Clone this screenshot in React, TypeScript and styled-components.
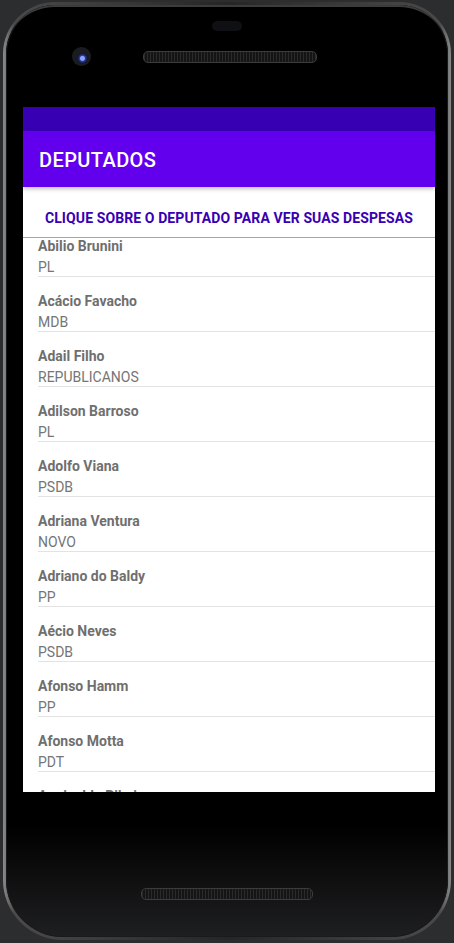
import styled, { createGlobalStyle } from "styled-components";

const GlobalStyle = createGlobalStyle`
  html, body {
    margin: 0;
    padding: 0;
    background-color: #2c2d2f;
    font-family: Roboto, "Noto Sans", sans-serif;
  }
`;

const Page = styled.div`
  width: 454px;
  height: 943px;
  padding: 2px 0 0 3px;
  box-sizing: border-box;
  overflow: hidden;
`;

const Phone = styled.div`
  width: 448px;
  height: 938px;
  padding: 3px;
  box-sizing: border-box;
  border-radius: 52px 52px 60px 60px;
  background: linear-gradient(90deg, #8a8a8a 0%, #4a4a4a 2.5%, #262626 50%, #4a4a4a 97.5%, #8a8a8a 100%);
`;

const Body = styled.div`
  height: 100%;
  border-radius: 49px 49px 57px 57px;
  background: linear-gradient(180deg, #000 0%, #000 88%, #1e1f20 100%);
  box-shadow: inset 0 5px 0 -3px #3c3c3c, inset 0 0 0 1px #1a1a1a;
  display: flex;
  flex-direction: column;
  overflow: hidden;
`;

const TopBezel = styled.div`
  height: 102px;
  display: flex;
  flex-direction: column;
  align-items: center;
  padding-top: 16px;
  box-sizing: border-box;
`;

const Sensor = styled.div`
  width: 30px;
  height: 10px;
  border-radius: 5px;
  background-color: #0f1014;
`;

const CameraRow = styled.div`
  align-self: stretch;
  display: flex;
  align-items: center;
  gap: 52px;
  margin-top: 16px;
  padding-left: 66px;
`;

const Camera = styled.div`
  width: 19px;
  height: 19px;
  border-radius: 50%;
  background: radial-gradient(circle at 55% 60%, #8fa0ff 0 2px, #2a3a9a 3px, #101830 5px, #1b1c20 6px);
`;

const Grill = styled.div<{ $width: number }>`
  width: ${(p) => p.$width}px;
  height: 10px;
  border-radius: 5px;
  border: 1px solid #3c3c3c;
  background: repeating-linear-gradient(90deg, #2a2a2a 0 1px, #151515 1px 3px);
`;

const Screen = styled.div`
  height: 685px;
  margin: 0 13px 0 17px;
  display: flex;
  flex-direction: column;
  background-color: #fff;
  overflow: hidden;
`;

const StatusBar = styled.div`
  height: 24px;
  flex-shrink: 0;
  background-color: #3700b3;
`;

const AppBar = styled.div`
  height: 56px;
  flex-shrink: 0;
  box-sizing: border-box;
  display: flex;
  align-items: center;
  padding: 2px 0 0 16px;
  background-color: #6200ee;
  box-shadow: 0 2px 4px rgba(0, 0, 0, 0.25);
  position: relative;
  z-index: 1;
`;

const Title = styled.h1`
  margin: 0;
  color: #fff;
  font-size: 20px;
  font-weight: 500;
  letter-spacing: 0.4px;
`;

const Hint = styled.div`
  height: 51px;
  flex-shrink: 0;
  box-sizing: border-box;
  padding-top: 22px;
  text-align: center;
  color: #3700b3;
  font-size: 14px;
  font-weight: 700;
  line-height: 18px;
  letter-spacing: 0.1px;
  border-bottom: 1px solid #a6a6a6;
`;

const List = styled.div`
  display: flex;
  flex-direction: column;
`;

const Row = styled.div`
  margin-left: 15px;
  padding: 16px 0 1px;
  border-bottom: 1px solid #e3e3e3;
  flex-shrink: 0;
  display: flex;
  flex-direction: column;
  gap: 5px;
  &:first-child {
    padding-top: 0;
  }
`;

const Name = styled.div`
  color: #6f6f6f;
  font-size: 14px;
  font-weight: 700;
  line-height: 16px;
`;

const Party = styled.div`
  color: #757575;
  font-size: 14px;
  line-height: 16px;
`;

const BottomBezel = styled.div`
  flex: 1;
  display: flex;
  justify-content: center;
  padding-top: 96px;
`;

const deputados = [
  { nome: "Abilio Brunini", partido: "PL" },
  { nome: "Acácio Favacho", partido: "MDB" },
  { nome: "Adail Filho", partido: "REPUBLICANOS" },
  { nome: "Adilson Barroso", partido: "PL" },
  { nome: "Adolfo Viana", partido: "PSDB" },
  { nome: "Adriana Ventura", partido: "NOVO" },
  { nome: "Adriano do Baldy", partido: "PP" },
  { nome: "Aécio Neves", partido: "PSDB" },
  { nome: "Afonso Hamm", partido: "PP" },
  { nome: "Afonso Motta", partido: "PDT" },
  { nome: "Aguinaldo Ribeiro", partido: "PP" },
];

export default function App() {
  return (
    <Page>
      <GlobalStyle />
      <Phone>
        <Body>
          <TopBezel>
            <Sensor />
            <CameraRow>
              <Camera />
              <Grill $width={172} />
            </CameraRow>
          </TopBezel>
          <Screen>
            <StatusBar />
            <AppBar>
              <Title>DEPUTADOS</Title>
            </AppBar>
            <Hint>CLIQUE SOBRE O DEPUTADO PARA VER SUAS DESPESAS</Hint>
            <List>
              {deputados.map((d) => (
                <Row key={d.nome}>
                  <Name>{d.nome}</Name>
                  <Party>{d.partido}</Party>
                </Row>
              ))}
            </List>
          </Screen>
          <BottomBezel>
            <Grill $width={170} />
          </BottomBezel>
        </Body>
      </Phone>
    </Page>
  );
}
